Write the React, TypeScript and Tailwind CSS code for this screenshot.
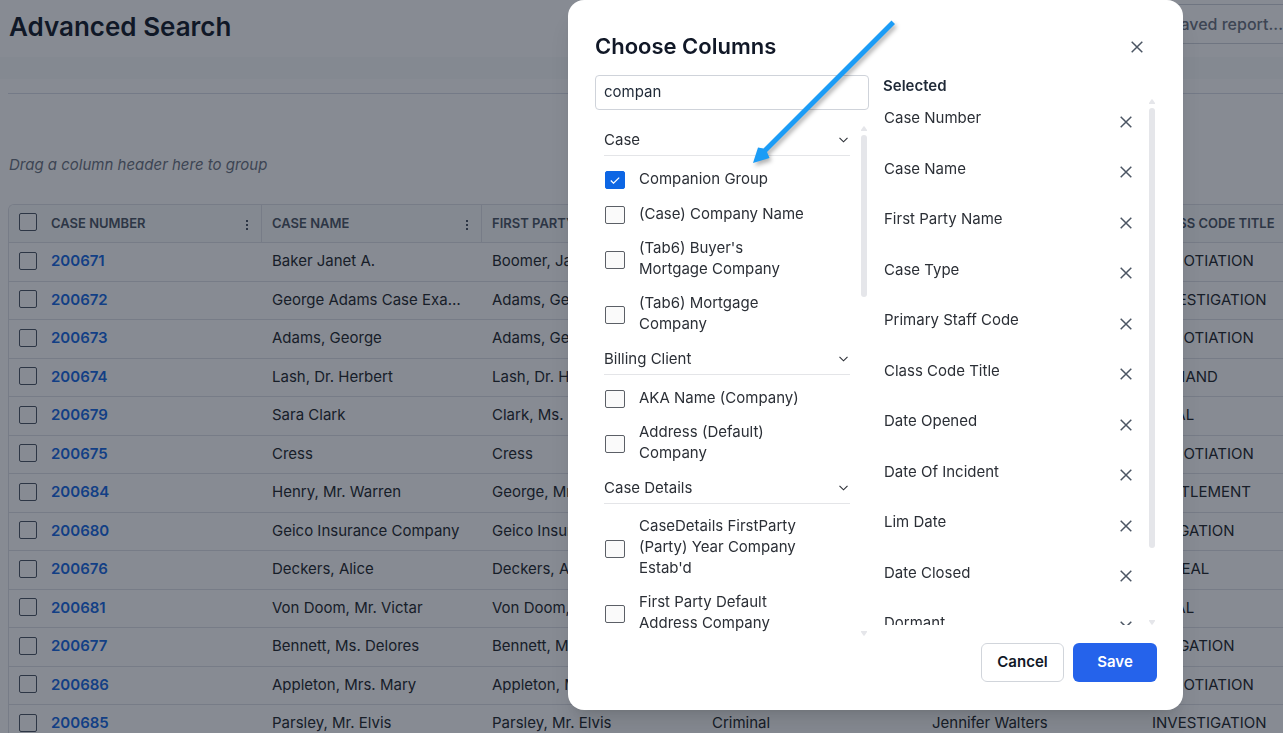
import { useState } from "react";

const headers = ["Case Number", "Case Name", "First Party Name", "Case Type", "Primary Staff Code", "Class Code Title"];

const cases: string[][] = [
  ["200671", "Baker Janet A.", "Boomer, Janet", "Personal Injury", "Jennifer Walters", "NEGOTIATION"],
  ["200672", "George Adams Case Example", "Adams, George", "Personal Injury", "Jennifer Walters", "INVESTIGATION"],
  ["200673", "Adams, George", "Adams, George", "Personal Injury", "Jennifer Walters", "NEGOTIATION"],
  ["200674", "Lash, Dr. Herbert", "Lash, Dr. Herbert", "Personal Injury", "Jennifer Walters", "DEMAND"],
  ["200679", "Sara Clark", "Clark, Ms. Sara", "Criminal", "Jennifer Walters", "TRIAL"],
  ["200675", "Cress", "Cress", "Personal Injury", "Jennifer Walters", "NEGOTIATION"],
  ["200684", "Henry, Mr. Warren", "George, Mr. Henry", "Criminal", "Jennifer Walters", "SETTLEMENT"],
  ["200680", "Geico Insurance Company", "Geico Insurance", "Criminal", "Jennifer Walters", "LITIGATION"],
  ["200676", "Deckers, Alice", "Deckers, Alice", "Criminal", "Jennifer Walters", "APPEAL"],
  ["200681", "Von Doom, Mr. Victar", "Von Doom, Mr. Victar", "Criminal", "Jennifer Walters", "TRIAL"],
  ["200677", "Bennett, Ms. Delores", "Bennett, Ms. Delores", "Criminal", "Jennifer Walters", "LITIGATION"],
  ["200686", "Appleton, Mrs. Mary", "Appleton, Mrs. Mary", "Criminal", "Jennifer Walters", "NEGOTIATION"],
  ["200685", "Parsley, Mr. Elvis", "Parsley, Mr. Elvis", "Criminal", "Jennifer Walters", "INVESTIGATION"],
];

const groups = [
  {
    title: "Case",
    options: ["Companion Group", "(Case) Company Name", "(Tab6) Buyer's Mortgage Company", "(Tab6) Mortgage Company"],
  },
  { title: "Billing Client", options: ["AKA Name (Company)", "Address (Default) Company"] },
  {
    title: "Case Details",
    options: ["CaseDetails FirstParty (Party) Year Company Estab'd", "First Party Default Address Company"],
  },
];

const selectedColumns = [
  "Case Number",
  "Case Name",
  "First Party Name",
  "Case Type",
  "Primary Staff Code",
  "Class Code Title",
  "Date Opened",
  "Date Of Incident",
  "Lim Date",
  "Date Closed",
  "Dormant",
];

function CloseIcon() {
  return (
    <svg className="size-3" viewBox="0 0 12 12" fill="none" stroke="currentColor" strokeWidth="1.5" aria-hidden="true">
      <path d="M.7.7l10.6 10.6M11.3.7L.7 11.3" />
    </svg>
  );
}

function ScrollTrack({ thumb }: { thumb: string }) {
  return (
    <div className="flex w-1.5 shrink-0 flex-col items-center text-[#e5e6ea]" aria-hidden="true">
      <svg className="h-[5px] w-1.5 shrink-0" viewBox="0 0 6 5" fill="currentColor">
        <path d="M2.4.5Q3 0 3.6.5L6 4v1H0V4z" />
      </svg>
      <div className="mt-1 mb-1 w-full grow">
        <div className={"w-full rounded-full bg-[#e5e6ea] " + thumb} />
      </div>
      <svg className="h-[5px] w-1.5 shrink-0" viewBox="0 0 6 5" fill="currentColor">
        <path d="M2.4 4.5Q3 5 3.6 4.5L6 1V0H0v1z" />
      </svg>
    </div>
  );
}

function GridCheckbox({ label }: { label: string }) {
  return (
    <input
      type="checkbox"
      aria-label={label}
      className="block size-[18px] appearance-none rounded-xs border border-[#4b5563] bg-white"
    />
  );
}

function CaseTable() {
  return (
    <div className="ml-2 overflow-hidden rounded-tl-md border-t border-l border-[#dfe1e6]">
      <table className="w-[1353px] table-fixed border-separate border-spacing-0 text-left text-[15px] leading-normal text-[#212529]">
        <colgroup>
          <col className="w-8" />
          <col className="w-[221px]" />
          <col className="w-[220px]" />
          <col className="w-[220px]" />
          <col className="w-[220px]" />
          <col className="w-[220px]" />
          <col className="w-[220px]" />
        </colgroup>
        <thead>
          <tr className="bg-gray-50 text-[13px] text-[#4b5563]">
            <th className="h-[38px] border-b border-[#dfe1e6] pb-1 pl-[10px]">
              <GridCheckbox label="Select all cases" />
            </th>
            {headers.map((h) => (
              <th key={h} className="h-[38px] border-r border-b border-[#dfe1e6] px-[10px] font-semibold">
                <div className="flex items-center justify-between">
                  <span className="truncate uppercase">{h}</span>
                  <button type="button" aria-label={h + " menu"} className="mr-[2px] flex w-[3px] flex-col gap-[2px] pt-0.5">
                    <span className="size-[2px] bg-[#4b5563]" />
                    <span className="size-[2px] bg-[#4b5563]" />
                    <span className="size-[2px] bg-[#4b5563]" />
                  </button>
                </div>
              </th>
            ))}
          </tr>
        </thead>
        <tbody>
          {cases.map((row) => (
            <tr key={row[0]}>
              <td className="border-b border-[#dfe1e6] pb-0.5 pl-[10px]">
                <GridCheckbox label={"Select case " + row[0]} />
              </td>
              {row.map((cell, i) => (
                <td key={i} className="truncate border-b border-[#dfe1e6] px-[10px] pt-[7px] pb-2">
                  {i === 0 ? (
                    <a href={"#case-" + cell} className="font-semibold text-[#1467e2]">
                      {cell}
                    </a>
                  ) : (
                    cell
                  )}
                </td>
              ))}
            </tr>
          ))}
        </tbody>
      </table>
    </div>
  );
}

function ColumnOption({ id, label, initial }: { id: string; label: string; initial: boolean }) {
  const [checked, setChecked] = useState(initial);
  return (
    <div className="flex items-center gap-[14px] py-[7px] pr-10 pl-px not-last:pb-1.5">
      <span className="mt-1 grid h-[18px] w-5 shrink-0">
        <input
          id={id}
          type="checkbox"
          checked={checked}
          onChange={() => setChecked(!checked)}
          className="col-start-1 row-start-1 h-[18px] w-5 appearance-none rounded-xs border border-[#5b5f66] bg-[#fafafa] checked:border-[#0d66e4] checked:bg-[#0d66e4]"
        />
        {checked && (
          <svg
            className="pointer-events-none col-start-1 row-start-1 m-auto h-[7px] w-[10px]"
            viewBox="0 0 10 7"
            fill="none"
            stroke="white"
            strokeWidth="1.2"
            aria-hidden="true"
          >
            <path d="M.8 3.5l2.7 2.7L9.2.6" />
          </svg>
        )}
      </span>
      <label htmlFor={id} className="leading-[21px]">
        {label}
      </label>
    </div>
  );
}

function ChooseColumns() {
  const [query, setQuery] = useState("compan");
  return (
    <div
      role="dialog"
      aria-labelledby="choose-title"
      className="w-[615px] rounded-2xl bg-white pt-[30px] pr-[26px] pb-7 pl-[27px] text-[15px] text-[#2b2f36] shadow-xl"
    >
      <div className="flex items-center justify-between pr-[14px]">
        <h2 id="choose-title" className="text-[22px] leading-8 font-semibold text-[#111827]">
          Choose Columns
        </h2>
        <button type="button" aria-label="Close" className="pt-0.5 text-[#4b5563]">
          <CloseIcon />
        </button>
      </div>

      <div className="mt-[13px] flex h-[561px] gap-[14px]">
        <div className="flex w-[274px] shrink-0 flex-col">
          <input
            type="text"
            aria-label="Search columns"
            value={query}
            onChange={(e) => setQuery(e.target.value)}
            className="h-[35px] shrink-0 rounded-sm border border-[#cfd3da] px-2 pb-0.5 text-[15px] text-[#1f2937] outline-none"
          />
          <div className="mt-4 flex min-h-0 grow gap-[11px] pr-[2px] pl-[9px]">
            <div className="grow overflow-hidden">
              {groups.map((g, gi) => (
                <section key={g.title}>
                  <h3 className="border-b border-[#e4e5e8]">
                    <button type="button" className="flex w-full items-center justify-between pt-[3px] pr-[2px] pb-[5px] leading-[21px]">
                      {g.title}
                      <svg className="h-1.5 w-[9px]" viewBox="0 0 9 6" fill="none" stroke="currentColor" strokeWidth="1.1" aria-hidden="true">
                        <path d="M.5.8l4 4 4-4" />
                      </svg>
                    </button>
                  </h3>
                  <div className="pt-1 pb-1">
                    {g.options.map((o, oi) => (
                      <ColumnOption key={o} id={"col-" + gi + "-" + oi} label={o} initial={gi === 0 && oi === 0} />
                    ))}
                  </div>
                </section>
              ))}
            </div>
            <ScrollTrack thumb="h-[162px]" />
          </div>
        </div>

        <div className="flex min-w-0 grow flex-col pb-[11px]">
          <h3 className="pb-[3px] leading-[21px] font-semibold text-[#1f2937]">Selected</h3>
          <div className="flex min-h-0 grow justify-between pr-[2px]">
            <ul className="w-[249px] overflow-hidden pt-2">
              {selectedColumns.map((c) => (
                <li key={c} className="flex items-center justify-between pb-7 pl-px leading-normal">
                  {c}
                  <button type="button" aria-label={"Remove " + c} className="mt-[3px] -mb-1 text-[#4b5563]">
                    <CloseIcon />
                  </button>
                </li>
              ))}
            </ul>
            <ScrollTrack thumb="h-[440px]" />
          </div>
        </div>
      </div>

      <div className="mt-[7px] flex justify-end gap-[9px]">
        <button type="button" className="h-[39px] w-[83px] rounded-md border border-[#d1d5db] bg-white font-semibold text-[#111827]">
          Cancel
        </button>
        <button type="button" className="h-[39px] w-[84px] rounded-md bg-[#2563eb] font-semibold text-white">
          Save
        </button>
      </div>
    </div>
  );
}

export default function App() {
  return (
    <div className="h-screen overflow-hidden bg-white font-[Inter,sans-serif]">
      <header className="flex h-[57px] items-start justify-between pl-[9px]">
        <h1 className="pt-[9px] text-[26px] leading-9 font-semibold text-[#111827]">Advanced Search</h1>
        <button
          type="button"
          className="mt-1 h-10 w-[300px] border-y border-l border-[#cfd3da] text-right text-base font-medium whitespace-nowrap text-[#6b7280]"
        >
          Select a Saved report...
        </button>
      </header>
      <div className="h-[22px] bg-gray-50" />
      <main>
        <div className="mt-[14px] ml-2 border-t border-[#d9dce6]" />
        <p className="pt-[60px] pb-[29px] pl-[9px] text-[15px] leading-[21px] text-[#6b7280] italic">
          Drag a column header here to group
        </p>
        <CaseTable />
      </main>

      <div className="fixed inset-0 flex items-start justify-end bg-gray-900/50 pr-[100px]">
        <ChooseColumns />
      </div>

      <svg
        className="pointer-events-none absolute top-[15px] left-[745px] h-[160px] w-[160px] drop-shadow-[2px_3px_2px_rgba(0,0,0,0.3)]"
        viewBox="0 0 160 160"
        fill="#1b9cf6"
        aria-hidden="true"
      >
        <path d="M146.500 5.500L150 9L22 137L24.500 143L8 148L13 132.500L18.500 133.500Z" />
      </svg>
    </div>
  );
}
